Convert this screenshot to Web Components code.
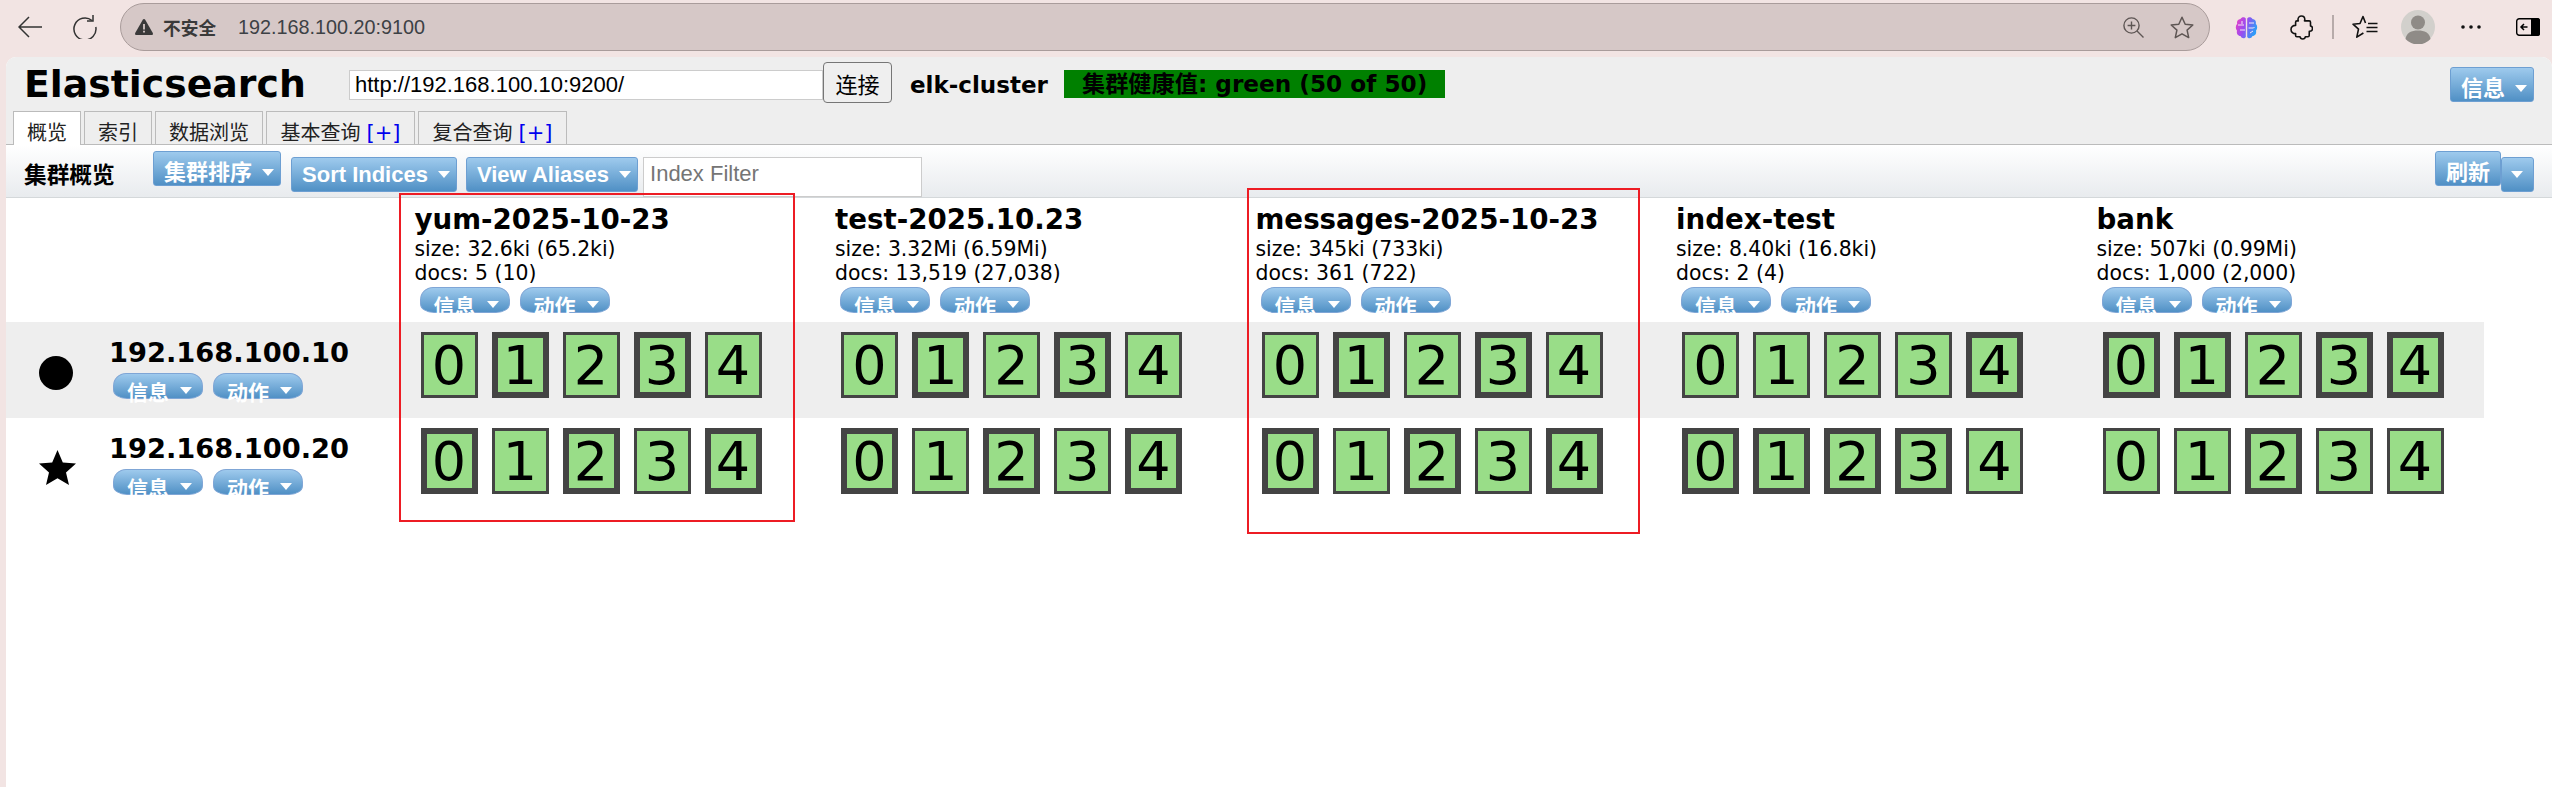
<!DOCTYPE html>
<html lang="zh">
<head>
<meta charset="utf-8">
<title>elasticsearch-head</title>
<style>
html,body{margin:0;height:100%;overflow:hidden;}
body{background:#f2e4e3;display:flex;flex-direction:column;font-family:"DejaVu Sans","Noto Sans CJK SC",sans-serif;color:#000;}
es-app{flex:1;}
</style>
</head>
<body>
<browser-bar url="192.168.100.20:9100"></browser-bar>
<es-app>
  <es-header slot="header"></es-header>
  <es-toolbar slot="toolbar"></es-toolbar>
  <cluster-row slot="rows" class="head">
    <span></span>
    <index-head name="yum-2025-10-23" size="size: 32.6ki (65.2ki)" docs="docs: 5 (10)"></index-head>
    <index-head name="test-2025.10.23" size="size: 3.32Mi (6.59Mi)" docs="docs: 13,519 (27,038)"></index-head>
    <index-head name="messages-2025-10-23" size="size: 345ki (733ki)" docs="docs: 361 (722)"></index-head>
    <index-head name="index-test" size="size: 8.40ki (16.8ki)" docs="docs: 2 (4)"></index-head>
    <index-head name="bank" size="size: 507ki (0.99Mi)" docs="docs: 1,000 (2,000)"></index-head>
  </cluster-row>
  <cluster-row slot="rows" shade>
    <node-head ip="192.168.100.10" kind="data"></node-head>
    <shard-set thick="1,3"></shard-set>
    <shard-set thick="1,3"></shard-set>
    <shard-set thick="1,3"></shard-set>
    <shard-set thick="4"></shard-set>
    <shard-set thick="0,1,3,4"></shard-set>
  </cluster-row>
  <cluster-row slot="rows">
    <node-head ip="192.168.100.20" kind="master"></node-head>
    <shard-set thick="0,2,4"></shard-set>
    <shard-set thick="0,2,4"></shard-set>
    <shard-set thick="0,2,4"></shard-set>
    <shard-set thick="0,1,2,3"></shard-set>
    <shard-set thick="2"></shard-set>
  </cluster-row>
  <red-box slot="marks" style="left:393px;top:136px;width:392px;height:325px"></red-box>
  <red-box slot="marks" style="left:1241px;top:131px;width:389px;height:342px"></red-box>
</es-app>

<script>
const ARROW='<svg width="12" height="7" viewBox="0 0 12 7"><path d="M0 0h12L6 7z" fill="#fff"/></svg>';

class BrowserBar extends HTMLElement{
  constructor(){
    super();
    this.attachShadow({mode:'open'}).innerHTML=`
    <style>
    :host{display:flex;align-items:center;height:57px;flex:none;padding:0 12px 3px 18px;box-sizing:border-box;color:#333;font-family:"Liberation Sans","Noto Sans CJK SC",sans-serif;}
    svg{display:block;flex:none;}
    .addr{width:2091px;height:48px;margin-left:23px;box-sizing:border-box;background:#d6c8c7;border:1px solid #a99c9b;border-radius:24px;display:flex;align-items:center;padding:0 14px 0 14px;}
    .warn{font:bold 17.7px "Noto Sans CJK SC",sans-serif;color:#3a3a3a;margin-left:10px;}
    .url{font-size:19.8px;margin-left:22px;color:#3d4145;}
    .sp{flex:1;}
    </style>
    <svg width="24" height="22" viewBox="0 0 24 22" fill="none" stroke="#333" stroke-width="1.5"><path d="M11 1 1 11l10 10M1 11h23"/></svg>
    <svg style="margin-left:30px" width="25" height="24" viewBox="0 0 25 24" fill="none" stroke="#333" stroke-width="1.5"><path d="M20 5.5A11 11 0 1 0 23.8 12"/><path d="M21 0v6h-6"/></svg>
    <div class="addr">
      <svg width="18" height="16" viewBox="0 0 18 16"><path d="M9 0c.5 0 .9.3 1.2.7l7.6 13.4c.4.8-.1 1.9-1.1 1.9H1.3C.3 16-.2 14.9.2 14.1L7.8.7C8.1.3 8.5 0 9 0z" fill="#3a3a3a"/><path d="M8.1 5h1.8v5.5H8.1zM8.1 11.7h1.8v1.8H8.1z" fill="#d6c8c7"/></svg>
      <span class="warn">不安全</span>
      <span class="url">${this.getAttribute('url')}</span>
      <span class="sp"></span>
      <svg width="21" height="21" viewBox="0 0 21 21" fill="none" stroke="#5e5654" stroke-width="1.4"><circle cx="8.5" cy="8.5" r="7.6"/><path d="M8.5 4.6v7.8M4.6 8.5h7.8M14 14l6.5 6.5"/></svg>
      <svg style="margin-left:26px;margin-right:1px" width="24" height="23" viewBox="0 0 24 23" fill="none" stroke="#5e5654" stroke-width="1.5" stroke-linejoin="round"><path d="M12 1.2l3.2 7 7.6.8-5.7 5.1 1.6 7.5L12 17.8l-6.7 3.8 1.6-7.5L1.200 9l7.600-.8z"/></svg>
    </div>
    <svg style="margin-left:25px" width="23" height="23" viewBox="0 0 23 23">
      <defs><linearGradient id="br" x1="0" y1="0" x2="1" y2=".4"><stop offset="0" stop-color="#f23fc0"/><stop offset=".5" stop-color="#9a4cf0"/><stop offset="1" stop-color="#2f9cf8"/></linearGradient></defs>
      <path d="M10.800 2.500C9.500.5 6.500.8 5.500 3 3 3.200 1.500 5.500 2.200 7.800.4 9.500.3 13 2 14.700c-.8 2.800 1 5.200 3.500 5.300 1 2.500 4 3 5.300 1zM12.200 2.500c1.300-2 4.300-1.700 5.300.5 2.500.2 4 2.500 3.300 4.800 1.800 1.700 1.900 5.200.2 6.900.8 2.800-1 5.200-3.500 5.300-1 2.500-4 3-5.300 1z" fill="url(#br)"/>
      <path d="M3 9h6M5 14h5M7 5v3M14 7h5M13.500 12h5l1-1M15 17l3-2" stroke="#f4e6f6" stroke-width="1" fill="none"/>
    </svg>
    <svg style="margin-left:32px" width="23" height="25" viewBox="0 0 23 25" fill="none" stroke="#111" stroke-width="1.600" stroke-linejoin="round"><path d="M8 4.500C8 2.400 9.500 1 11.400 1s3.400 1.400 3.400 3.500c0 .6-.1 1-.3 1.400h4.700c.8 0 1.300.5 1.300 1.300V11c1.200.2 2 1.200 2 2.500s-1 2.700-2.500 2.700h-.7l-.1 4.200c0 .8-.5 1.300-1.300 1.300h-2.500c-.2 1.400-1.300 2.300-2.700 2.300s-2.500-1-2.700-2.300H6.900c-.8 0-1.300-.5-1.300-1.300V18.600C3.300 18.800 1 17 1 14.400s2.300-4.200 4.600-4V7.200c0-.8.500-1.300 1.300-1.300h1.400C8.100 5.500 8 5 8 4.500z"/></svg>
    <span style="margin-left:19px;width:2px;height:24px;background:#b7abaa"></span>
    <svg style="margin-left:18px" width="26" height="24" viewBox="0 0 26 24" fill="none" stroke="#111" stroke-width="1.600" stroke-linejoin="round"><path d="M13.500 8 11 1.500 8 8.500 1 9.200l5.500 5-1.700 8 6.600-4.200"/><path d="M16 8.500h9.500M14.500 12.500h11M14.500 16.500h11"/></svg>
    <svg style="margin-left:23px" width="34" height="34" viewBox="0 0 34 34"><circle cx="17" cy="17" r="17" fill="#d2d0cc"/><circle cx="17" cy="12.500" r="7" fill="#8f8b87"/><path d="M4.500 29c1-6.500 6-8.500 12.500-8.500S28.500 22.500 29.500 29A17 17 0 0 1 4.500 29z" fill="#8f8b87"/></svg>
    <svg style="margin-left:26px" width="20" height="4" viewBox="0 0 20 4" fill="#111"><circle cx="2" cy="2" r="1.800"/><circle cx="10" cy="2" r="1.800"/><circle cx="18" cy="2" r="1.800"/></svg>
    <svg style="margin-left:35px" width="24" height="18" viewBox="0 0 24 18"><rect x=".7" y=".7" width="22.600" height="16.600" rx="2.500" fill="none" stroke="#000" stroke-width="1.400"/><path d="M15 0h6.500A2.500 2.500 0 0 1 24 2.500v13a2.500 2.500 0 0 1-2.500 2.500H15z"/><path d="M11.500 9H5M8 6 5 9l3 3" fill="none" stroke="#000" stroke-width="1.500"/></svg>`;
  }
}
customElements.define('browser-bar',BrowserBar);

const appTpl=document.createElement('template');
appTpl.innerHTML=`
<style>
:host{display:block;position:relative;margin-left:6px;background:#fff;border-radius:10px 10px 0 0;overflow:hidden;}
.rows{display:block;}
</style>
<slot name="header"></slot>
<slot name="toolbar"></slot>
<div class="rows"><slot name="rows"></slot></div>
<slot name="marks"></slot>`;
class EsApp extends HTMLElement{
  constructor(){
    super();
    this.attachShadow({mode:'open'}).appendChild(appTpl.content.cloneNode(true));
  }
}
customElements.define('es-app',EsApp);

class BlueBtn extends HTMLElement{
  constructor(){
    super();
    // noarrow: plain button, used by the refresh half of the split button
    this.attachShadow({mode:'open'}).innerHTML=`
    <style>
    :host{display:inline-flex;align-items:center;gap:10px;box-sizing:border-box;height:35px;padding:8px 6px 0 10px;flex:none;
      background:linear-gradient(#9ecaed,#5090c5);border:1px solid #6d9fd2;border-radius:3px;color:#fff;white-space:nowrap;
      font:bold 22px/26px "Liberation Sans","Noto Sans CJK SC",sans-serif;}
    svg{display:block;}
    </style><slot></slot>${this.hasAttribute('noarrow')?'':ARROW}`;
  }
}
customElements.define('blue-btn',BlueBtn);

class PillBtn extends HTMLElement{
  constructor(){
    super();
    this.attachShadow({mode:'open'}).innerHTML=`
    <style>
    :host{display:flex;align-items:flex-start;gap:11px;box-sizing:border-box;width:90px;height:26px;padding-left:13px;flex:none;
      background:linear-gradient(#9ecaed,#5090c5);border:1px solid #7fa6d6;border-radius:13px 13px 14px 14px / 13px 13px 9px 9px;color:#fff;white-space:nowrap;
      font:bold 21px/26px "Noto Sans CJK SC",sans-serif;}
    span{display:block;margin-top:4px;height:26px;}
    svg{display:block;margin-top:13px;}
    </style><span><slot></slot></span>${ARROW}`;
  }
}
customElements.define('pill-btn',PillBtn);

class EsHeader extends HTMLElement{
  constructor(){
    super();
    const tabs=[['概览',68,1],['索引',68],['数据浏览',108],['基本查询',149,0,1],['复合查询',149,0,1]];
    this.attachShadow({mode:'open'}).innerHTML=`
    <style>
    :host{display:block;background:#eee;height:87px;}
    .top{display:flex;align-items:flex-start;height:54px;}
    h1{margin:4px 0 0 18px;width:325px;font:bold 37.8px/46px "DejaVu Sans",sans-serif;}
    input{box-sizing:border-box;width:474px;height:30px;margin:13px 0 0;padding:0 5px;border:1px solid #ccc;background:#fff;font:22px "Liberation Sans",sans-serif;color:#000;outline:none;}
    button{box-sizing:border-box;width:69px;height:41px;margin:5px 0 0;padding:0;border:1px solid #767676;border-radius:4px;background:#efefef;font:22px "Noto Sans CJK SC",sans-serif;color:#000;}
    .name{margin:13px 0 0 18px;width:154px;font:bold 23px/30px "DejaVu Sans",sans-serif;white-space:nowrap;}
    .health{margin-top:13px;padding:0 18px;height:28px;background:#008000;font:bold 23.2px/28px "DejaVu Sans","Noto Sans CJK SC",sans-serif;white-space:nowrap;}
    blue-btn{margin:10px 18px 0 auto;}
    .tabs{display:flex;align-items:flex-start;gap:3px;padding-left:7px;}
    .tab{box-sizing:border-box;height:33px;border:1px solid #bbb;border-bottom:0;background:#eee;text-align:center;font:20px/40px "Noto Sans CJK SC",sans-serif;color:#222;white-space:nowrap;position:relative;z-index:1;}
    .tab.on{background:#fff;height:34px;}
    .tab b{font:21px "DejaVu Sans",sans-serif;color:#00e;margin-left:6px;}
    </style>
    <div class="top">
      <h1>Elasticsearch</h1>
      <input value="http://192.168.100.10:9200/">
      <button>连接</button>
      <div class="name">elk-cluster</div>
      <div class="health">集群健康值: green (50 of 50)</div>
      <blue-btn>信息</blue-btn>
    </div>
    <div class="tabs">${tabs.map(t=>`<div class="tab${t[2]?' on':''}" style="width:${t[1]}px">${t[0]}${t[3]?'<b>[+]</b>':''}</div>`).join('')}</div>`;
  }
}
customElements.define('es-header',EsHeader);

class EsToolbar extends HTMLElement{
  constructor(){
    super();
    this.attachShadow({mode:'open'}).innerHTML=`
    <style>
    :host{display:flex;align-items:flex-start;box-sizing:border-box;height:54px;border-top:1px solid #bbb;border-bottom:1px solid #d4d8da;background:linear-gradient(#fff,#e8ebee);}
    .title{margin:13px 0 0 18px;width:129px;font:bold 22.7px/32px "Noto Sans CJK SC",sans-serif;}
    blue-btn{margin-top:6px;}
    blue-btn.low{margin-top:12px;padding-top:0;}
    input{box-sizing:border-box;width:279px;height:40px;margin:12px 0 0 5px;padding:0 6px 6px;border:1px solid #ccc;background:#fff;font:22px "Liberation Sans",sans-serif;outline:none;}
    input::placeholder{color:#757575;}
    .sp{flex:1;}
    </style>
    <div class="title">集群概览</div>
    <blue-btn>集群排序</blue-btn>
    <blue-btn class="low" style="margin-left:10px">Sort Indices</blue-btn>
    <blue-btn class="low" style="margin-left:9px;">View Aliases</blue-btn>
    <input placeholder="Index Filter">
    <span class="sp"></span>
    <blue-btn noarrow style="width:66px">刷新</blue-btn>
    <blue-btn class="low" style="width:33px;padding-left:9px;padding-right:0;margin-right:18px"></blue-btn>`;
  }
}
customElements.define('es-toolbar',EsToolbar);

class ClusterRow extends HTMLElement{
  constructor(){
    super();
    this.attachShadow({mode:'open'}).innerHTML=`
    <style>
    :host{display:grid;grid-template-columns:408.5px 420.5px 420.5px 420.5px 420.5px 387px;width:2478px;height:96px;}
    :host([shade]){background:#eee;}
    :host(.head){height:124px;}
    </style><slot></slot>`;
  }
}
customElements.define('cluster-row',ClusterRow);

class IndexHead extends HTMLElement{
  constructor(){
    super();
    this.attachShadow({mode:'open'}).innerHTML=`
    <style>
    :host{display:block;padding-top:5px;white-space:nowrap;}
    h2{margin:0;font:bold 27.7px/34px "DejaVu Sans",sans-serif;}
    p{margin:0;font:20.4px/24px "DejaVu Sans",sans-serif;}
    .acts{display:flex;gap:10px;margin:2px 0 0 5px;}
    </style>
    <h2>${this.getAttribute('name')}</h2>
    <p>${this.getAttribute('size')}</p>
    <p>${this.getAttribute('docs')}</p>
    <div class="acts"><pill-btn>信息</pill-btn><pill-btn>动作</pill-btn></div>`;
  }
}
customElements.define('index-head',IndexHead);

class NodeHead extends HTMLElement{
  constructor(){
    super();
    const icon=this.getAttribute('kind')=='master'
      ?'<svg style="margin-top:32px" width="37" height="35" viewBox="0 0 37 35"><path d="M18.500 0l5.300 12.600 13.200 1-10 8.800 3 12.600-11.500-6.800L7 35l3-12.600-10-8.800 13.200-1z"/></svg>'
      :'<svg style="margin-top:34px" width="34" height="34" viewBox="0 0 34 34"><circle cx="17" cy="17" r="17"/></svg>';
    this.attachShadow({mode:'open'}).innerHTML=`
    <style>
    :host{display:flex;}
    .ic{width:72px;padding-left:33px;box-sizing:border-box;flex:none;}
    svg{display:block;}
    .ip{margin:15px 0 0 31px;font:bold 27.3px/32px "DejaVu Sans",sans-serif;}
    .acts{display:flex;gap:10px;margin:4px 0 0 35px;}
    </style>
    <div class="ic">${icon}</div>
    <div><div class="ip">${this.getAttribute('ip')}</div>
    <div class="acts"><pill-btn>信息</pill-btn><pill-btn>动作</pill-btn></div></div>`;
  }
}
customElements.define('node-head',NodeHead);

class ShardBox extends HTMLElement{
  constructor(){
    super();
    this.attachShadow({mode:'open'}).innerHTML=`
    <style>
    :host{display:flex;align-items:center;justify-content:center;box-sizing:border-box;width:57px;height:66px;padding-top:2px;background:#99dd88;border:3px solid #444;font:54px/1 "DejaVu Sans",sans-serif;color:#000;}
    :host([primary]){border-width:6px;}
    </style><slot></slot>`;
  }
}
customElements.define('shard-box',ShardBox);

class ShardSet extends HTMLElement{
  constructor(){
    super();
    const thick=this.getAttribute('thick').split(',');
    this.attachShadow({mode:'open'}).innerHTML=`
    <style>:host{display:flex;gap:14px;padding:10px 0 0 6px;}</style>
    ${[0,1,2,3,4].map(n=>`<shard-box${thick.includes(''+n)?' primary':''}>${n}</shard-box>`).join('')}`;
  }
}
customElements.define('shard-set',ShardSet);

class RedBox extends HTMLElement{
  constructor(){
    super();
    this.attachShadow({mode:'open'}).innerHTML=`
    <style>:host{display:block;position:absolute;box-sizing:content-box;border:2px solid #ed1c24;pointer-events:none;}</style>`;
  }
}
customElements.define('red-box',RedBox);
</script>
</body>
</html>
